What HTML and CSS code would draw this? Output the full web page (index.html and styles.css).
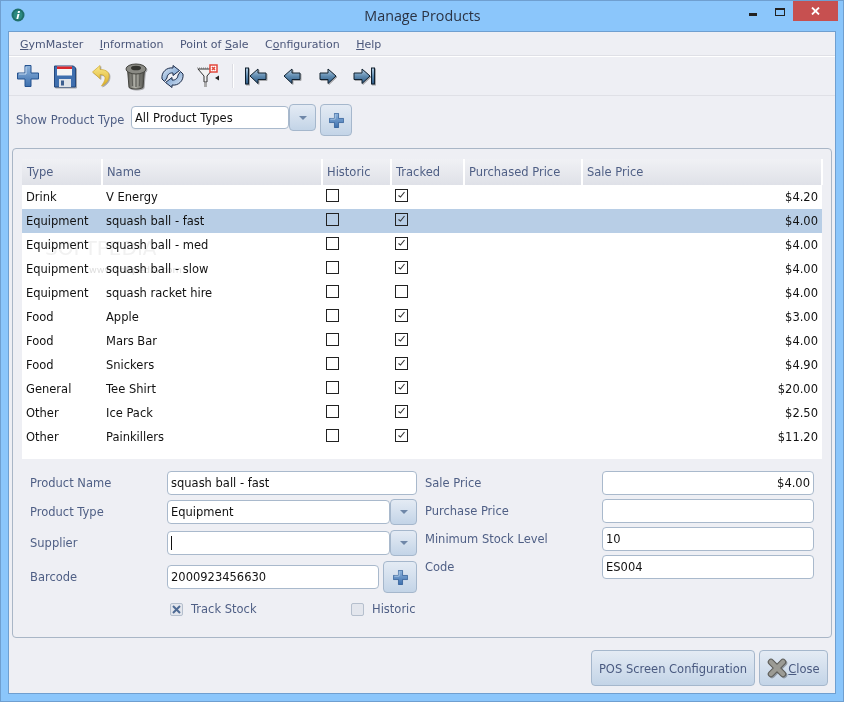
FILE: index.html
```html
<!doctype html>
<html lang="en">
  <head>
    <meta charset="UTF-8" />
    <title>Manage Products</title>
    <link rel="stylesheet" href="styles.css">
  </head>
  <body>
    <svg class="defs" width="0" height="0">
      <defs>
        <linearGradient id="blueFill" x1="0" y1="0" x2="0" y2="1">
          <stop offset="0" stop-color="#8fb4dc" />
          <stop offset="1" stop-color="#3c6fae" />
        </linearGradient>
        <linearGradient id="arrowFill" x1="0" y1="0" x2="0" y2="1">
          <stop offset="0" stop-color="#b4cde2" />
          <stop offset="0.5" stop-color="#5f8bb0" />
          <stop offset="1" stop-color="#2f5a85" />
        </linearGradient>
        <linearGradient id="binFill" x1="0" y1="0" x2="1" y2="0">
          <stop offset="0" stop-color="#55554f" />
          <stop offset="0.45" stop-color="#b5b5ad" />
          <stop offset="1" stop-color="#4b4b46" />
        </linearGradient>
        <linearGradient id="undoFill" x1="0" y1="0" x2="0" y2="1">
          <stop offset="0" stop-color="#f9e98c" />
          <stop offset="1" stop-color="#dcae26" />
        </linearGradient>
        <linearGradient id="syncFill" x1="0" y1="0" x2="1" y2="1">
          <stop offset="0" stop-color="#e4edf7" />
          <stop offset="1" stop-color="#5b8cc6" />
        </linearGradient>
        <symbol id="plus" viewBox="0 0 22 22">
          <path d="M8 0.500h6v7.500h7.500v6H14v7.500H8V14H0.500V8H8z" fill="url(#blueFill)" stroke="#24528f" />
          <path d="M9 2v7H2" fill="none" stroke="#c4d8ee" />
        </symbol>
        <symbol id="leftArrow" viewBox="0 0 18 18">
          <path d="M1 9l8-7v4h8v6.500H9v4z" fill="url(#arrowFill)" stroke="#10202f" stroke-linejoin="round" />
        </symbol>
        <symbol id="check" viewBox="0 0 13 13">
          <path d="M3.500 6.500l2 1.500L9.500 3" fill="none" stroke="#333" stroke-width="1.100" />
        </symbol>
      </defs>
    </svg>

    <div class="window">
      <div class="titlebar">
        <svg class="app-icon" width="14" height="14" viewBox="0 0 14 14">
          <circle cx="7" cy="7" r="6.500" fill="#1f6f6a" />
          <circle cx="7" cy="7" r="4.500" fill="#2c8a80" />
          <path d="M6.500 6h2l-1.300 5H5.400zM7 3h2l-.4 2H6.600z" fill="#fff" />
        </svg>
        <div class="title">Manage Products</div>
        <div class="controls">
          <span class="ctl-min"></span>
          <span class="ctl-max"></span>
          <span class="ctl-close">
            <svg width="9" height="8" viewBox="0 0 9 8"><path d="M1 0.500l7 7M8 0.500l-7 7" stroke="#fff" stroke-width="1.800" /></svg>
          </span>
        </div>
      </div>

      <div class="client">
        <div class="menubar">
          <span class="menu-item"><u>G</u>ymMaster</span>
          <span class="menu-item"><u>I</u>nformation</span>
          <span class="menu-item">Point of <u>S</u>ale</span>
          <span class="menu-item">C<u>o</u>nfiguration</span>
          <span class="menu-item"><u>H</u>elp</span>
        </div>

        <div class="toolbar">
          <span class="tool"><svg width="22" height="22"><use href="#plus" /></svg></span>
          <span class="tool">
            <svg class="shadow" width="23" height="23" viewBox="0 0 23 23">
              <path d="M1.500 1h19l2 2v19h-21z" fill="#3f6fae" stroke="#24487d" />
              <rect x="4" y="1.500" width="15" height="9" fill="#f4f4f4" />
              <rect x="4" y="1.500" width="15" height="2.500" fill="#d9252b" />
              <rect x="6" y="14" width="12" height="8" fill="#dfe3e8" />
              <rect x="8" y="15.500" width="3" height="5" fill="#3d5f8f" />
            </svg>
          </span>
          <span class="tool">
            <svg class="shadow undo" width="18" height="22" viewBox="0 0 18 22">
              <path d="M8 0.500L0.500 7 8 13.500V9.500c3.500 0 5.500 1.500 5 4.500-.4 2.500-2 4.500-3.500 7 5-2 8-6.500 7.500-11C16.500 6 12.500 4.500 8 4.500z" fill="url(#undoFill)" stroke="#cfa82e" stroke-width="0.700" />
            </svg>
          </span>
          <span class="tool">
            <svg class="shadow" width="22" height="27" viewBox="0 0 22 27">
              <path d="M2.500 6L4 24.500c3 2 11 2 14 0L19.500 6z" fill="url(#binFill)" stroke="#44443f" />
              <path d="M7 11l.5 12M11 11v13M15 11l-.5 12" stroke="#5f5f5a" stroke-width="1.300" />
              <ellipse cx="11" cy="6" rx="10" ry="5" fill="#8a8a84" stroke="#44443f" />
              <ellipse cx="11" cy="5" rx="5" ry="2.300" fill="#33332f" />
            </svg>
          </span>
          <span class="tool">
            <svg width="23" height="23" viewBox="0 0 23 23">
              <g id="syncArc">
                <path d="M1 14C0 7 6 2 12 3V0.500l6.500 5-6.500 5V8C8.500 7.500 6 10 6 13l-2.500 3.500z" fill="url(#syncFill)" stroke="#1a2a48" stroke-linejoin="round" />
              </g>
              <use href="#syncArc" transform="rotate(180 11.500 11.500)" />
            </svg>
          </span>
          <span class="tool">
            <svg width="25" height="24" viewBox="0 0 25 24">
              <path d="M1 4h14" stroke="#888" stroke-dasharray="1 1" />
              <path d="M2 5h15l-6 7v6H8v-6z" fill="#f2f2f2" stroke="#333" />
              <path d="M8 19h3v4H8z" fill="#aaa" />
              <rect x="14" y="1" width="7" height="7" fill="#fff" stroke="#e2483c" stroke-width="1.500" />
              <path d="M16 3l3 3M19 3l-3 3" stroke="#e2483c" stroke-width="1.500" />
              <path d="M19 14l4-2.500v5z" fill="#222" />
            </svg>
          </span>
          <span class="tool-sep"></span>
          <span class="tool">
            <svg class="shadow" width="22" height="18" viewBox="0 0 22 18">
              <rect x="0.500" y="1" width="3" height="16" fill="url(#arrowFill)" stroke="#10202f" />
              <use href="#leftArrow" x="4" width="18" height="18" />
            </svg>
          </span>
          <span class="tool"><svg class="shadow" width="18" height="18"><use href="#leftArrow" /></svg></span>
          <span class="tool"><svg class="shadow flip" width="18" height="18"><use href="#leftArrow" /></svg></span>
          <span class="tool">
            <svg class="shadow flip" width="22" height="18" viewBox="0 0 22 18">
              <rect x="0.500" y="1" width="3" height="16" fill="url(#arrowFill)" stroke="#10202f" />
              <use href="#leftArrow" x="4" width="18" height="18" />
            </svg>
          </span>
        </div>

        <div class="filter-row">
          <label class="label">Show Product Type</label>
          <div class="input filter-input">All Product Types</div>
          <button class="btn drop"><span class="caret"></span></button>
          <button class="btn add-lg"><svg width="15" height="15"><use href="#plus" /></svg></button>
        </div>

        <div class="panel">
          <div class="grid-wrap">
            <table class="grid">
              <colgroup>
                <col class="c-type" /><col class="c-name" /><col class="c-hist" /><col class="c-track" /><col class="c-buy" /><col class="c-sale" />
              </colgroup>
              <thead>
                <tr><th>Type</th><th>Name</th><th>Historic</th><th>Tracked</th><th>Purchased Price</th><th>Sale Price</th></tr>
              </thead>
              <tbody>
                <tr><td>Drink</td><td>V Energy</td><td><span class="cb"></span></td><td><span class="cb"><svg width="13" height="13"><use href="#check" /></svg></span></td><td></td><td class="num">$4.20</td></tr>
                <tr class="selected"><td>Equipment</td><td>squash ball - fast</td><td><span class="cb"></span></td><td><span class="cb"><svg width="13" height="13"><use href="#check" /></svg></span></td><td></td><td class="num">$4.00</td></tr>
                <tr><td>Equipment</td><td>squash ball - med</td><td><span class="cb"></span></td><td><span class="cb"><svg width="13" height="13"><use href="#check" /></svg></span></td><td></td><td class="num">$4.00</td></tr>
                <tr><td>Equipment</td><td>squash ball - slow</td><td><span class="cb"></span></td><td><span class="cb"><svg width="13" height="13"><use href="#check" /></svg></span></td><td></td><td class="num">$4.00</td></tr>
                <tr><td>Equipment</td><td>squash racket hire</td><td><span class="cb"></span></td><td><span class="cb"></span></td><td></td><td class="num">$4.00</td></tr>
                <tr><td>Food</td><td>Apple</td><td><span class="cb"></span></td><td><span class="cb"><svg width="13" height="13"><use href="#check" /></svg></span></td><td></td><td class="num">$3.00</td></tr>
                <tr><td>Food</td><td>Mars Bar</td><td><span class="cb"></span></td><td><span class="cb"><svg width="13" height="13"><use href="#check" /></svg></span></td><td></td><td class="num">$4.00</td></tr>
                <tr><td>Food</td><td>Snickers</td><td><span class="cb"></span></td><td><span class="cb"><svg width="13" height="13"><use href="#check" /></svg></span></td><td></td><td class="num">$4.90</td></tr>
                <tr><td>General</td><td>Tee Shirt</td><td><span class="cb"></span></td><td><span class="cb"><svg width="13" height="13"><use href="#check" /></svg></span></td><td></td><td class="num">$20.00</td></tr>
                <tr><td>Other</td><td>Ice Pack</td><td><span class="cb"></span></td><td><span class="cb"><svg width="13" height="13"><use href="#check" /></svg></span></td><td></td><td class="num">$2.50</td></tr>
                <tr><td>Other</td><td>Painkillers</td><td><span class="cb"></span></td><td><span class="cb"><svg width="13" height="13"><use href="#check" /></svg></span></td><td></td><td class="num">$11.20</td></tr>
              </tbody>
            </table>
          </div>

          <div class="form">
            <div class="form-left">
              <div class="field f-name">
                <label class="label">Product Name</label>
                <div class="input grow">squash ball - fast</div>
              </div>
              <div class="field f-type">
                <label class="label">Product Type</label>
                <div class="input grow">Equipment</div>
                <button class="btn drop-sm"><span class="caret"></span></button>
              </div>
              <div class="field f-supplier">
                <label class="label">Supplier</label>
                <div class="input grow"><span class="cursor"></span></div>
                <button class="btn drop-sm"><span class="caret"></span></button>
              </div>
              <div class="field f-barcode">
                <label class="label">Barcode</label>
                <div class="input grow">2000923456630</div>
                <button class="btn add-md"><svg width="15" height="15"><use href="#plus" /></svg></button>
              </div>
              <div class="flags">
                <span class="flag flag-track">
                  <span class="flat-cb">
                    <svg width="11" height="11" viewBox="0 0 11 11"><path d="M2 2l7 7M9 2l-7 7" stroke="#4f6b94" stroke-width="2" /></svg>
                  </span>
                  <span class="label">Track Stock</span>
                </span>
                <span class="flag">
                  <span class="flat-cb"></span>
                  <span class="label">Historic</span>
                </span>
              </div>
            </div>
            <div class="form-right">
              <div class="field-r"><label class="label">Sale Price</label><div class="input wide right">$4.00</div></div>
              <div class="field-r"><label class="label">Purchase Price</label><div class="input wide"></div></div>
              <div class="field-r"><label class="label">Minimum Stock Level</label><div class="input wide">10</div></div>
              <div class="field-r"><label class="label">Code</label><div class="input wide">ES004</div></div>
            </div>
          </div>
        </div>

        <div class="footer">
          <button class="btn foot-btn"><span>POS Screen Configuration</span></button>
          <button class="btn foot-btn close-btn">
            <svg class="shadow" width="20" height="20" viewBox="0 0 20 20">
              <path d="M4 4l12 12M16 4L4 16" stroke="#5d5d59" stroke-width="6.500" stroke-linecap="round" />
              <path d="M4 4l12 12M16 4L4 16" stroke="#9b9b95" stroke-width="4.500" stroke-linecap="round" />
            </svg>
            <span><u>C</u>lose</span>
          </button>
        </div>
      </div>

      <div class="watermark">SOFTPEDIA<small>www.softpedia.com</small></div>
    </div>
  </body>
</html>
```

FILE: styles.css
```css
* {
  box-sizing: border-box;
}

html,
body {
  margin: 0;
  height: 702px;
  overflow: hidden;
}

body {
  font-family: "DejaVu Sans", sans-serif;
  font-size: 11.500px;
  color: #111;
}

.defs {
  position: absolute;
}

.window {
  position: relative;
  width: 844px;
  height: 702px;
  display: flex;
  flex-direction: column;
  padding: 0 7px 7px 7px;
  background: #8bc6fb;
  border: 1px solid #6f9fd0;
}

/* title bar */
.titlebar {
  position: relative;
  height: 30px;
  flex: none;
  margin-right: -1px;
}

.app-icon {
  position: absolute;
  left: 3px;
  top: 7px;
}

.title {
  text-align: center;
  font-family: "Open Sans", sans-serif;
  font-size: 14.300px;
  line-height: 29px;
  color: #2b3344;
}

.controls {
  position: absolute;
  top: 0;
  right: -1px;
  display: flex;
}

.ctl-min {
  width: 8px;
  height: 3px;
  margin: 12px 18px 0 0;
  background: #222;
}

.ctl-max {
  width: 10px;
  height: 8px;
  margin: 7px 8px 0 0;
  border: 1px solid #222;
  border-top-width: 2px;
}

.ctl-close {
  width: 45px;
  height: 20px;
  background: #c75050;
  display: flex;
  align-items: center;
  justify-content: center;
}

.client {
  flex: 1;
  display: flex;
  flex-direction: column;
  background: #eeeff4;
  border: 1px solid #6f9fd0;
}

/* menu */
.menubar {
  height: 24px;
  flex: none;
  display: flex;
  align-items: center;
  padding: 1px 0 0 11px;
  color: #4a5679;
  font-size: 11px;
  border-bottom: 1px solid #dfe0e6;
}

.menu-item {
  margin-right: 16.500px;
}

/* toolbar */
.toolbar {
  height: 40px;
  flex: none;
  display: flex;
  align-items: center;
  padding-left: 1px;
  border-top: 1px solid #fff;
  border-bottom: 1px solid #dfe0e6;
}

.tool {
  width: 36px;
  height: 36px;
  display: flex;
  align-items: center;
  justify-content: center;
}

.tool-sep {
  width: 1px;
  height: 24px;
  margin: 0 5px 0 6px;
  background: #dcdde3;
  box-shadow: 1px 0 0 #fff;
}

.shadow {
  filter: drop-shadow(1px 1px 0.600px rgba(0, 0, 0, 0.3));
}

.undo {
  margin-left: 1px;
}

.flip {
  transform: scaleX(-1);
  filter: drop-shadow(-1px 1px 0.600px rgba(0, 0, 0, 0.3));
}

/* inputs */
.label {
  color: #4f5f85;
}

.input {
  height: 24px;
  padding: 0 3px;
  line-height: 23px;
  background: #fff;
  border: 1px solid #a9b9cc;
  border-radius: 4px;
  white-space: nowrap;
}

.btn {
  display: flex;
  align-items: center;
  justify-content: center;
  padding: 0;
  font: inherit;
  color: #4a5a80;
  background: linear-gradient(#e4ebf4, #c3d4e7);
  border: 1px solid #a5b7cc;
  border-radius: 4px;
}

.caret {
  width: 0;
  height: 0;
  border: 4px solid transparent;
  border-top: 4px solid #6f87a8;
  border-bottom: 0;
}

.filter-row {
  height: 52px;
  flex: none;
  display: flex;
  align-items: flex-start;
  padding: 8px 0 0 7px;
}

.filter-row .label {
  width: 115px;
  margin-top: 9px;
}

.filter-input {
  width: 158px;
  height: 23px;
  line-height: 22px;
  margin-top: 2px;
}

.drop {
  width: 27px;
  height: 27px;
  margin: 0 4px 0 0;
}

.add-lg {
  width: 32px;
  height: 32px;
}

/* panel with the grid and the form */
.panel {
  width: 820px;
  height: 490px;
  flex: none;
  margin-left: 3px;
  padding: 10px 9px 0;
  border: 1px solid #a9b6c6;
  border-radius: 4px;
}

.grid-wrap {
  height: 300px;
  background: #fff;
}

.grid {
  width: 800px;
  border-collapse: collapse;
  table-layout: fixed;
}

.c-type { width: 80px; }
.c-name { width: 220px; }
.c-hist { width: 69px; }
.c-track { width: 73px; }
.c-buy { width: 118px; }
.c-sale { width: 240px; }

.grid th {
  height: 26px;
  padding: 0 0 0 4px;
  font-weight: normal;
  text-align: left;
  color: #4f5f85;
  background: linear-gradient(#f0f1f5, #dfe1e8);
  border-right: 2px solid #fff;
}

.grid th:first-child {
  padding-left: 5px;
}

.grid td {
  height: 24px;
  padding: 0 4px;
  white-space: nowrap;
}

.grid td.num {
  text-align: right;
}

.selected td {
  background: #b8cee6;
}

.cb {
  display: block;
  width: 13px;
  height: 13px;
  margin-top: -3px;
  border: 1px solid #222;
}

.cb svg {
  display: block;
  margin: -1px;
}

/* form */
.form {
  display: flex;
  height: 170px;
  padding: 12px 0 0 8px;
}

.form-left {
  width: 387px;
}

.form-right {
  margin-left: 8px;
}

.field {
  display: flex;
  align-items: center;
}

.field .label {
  width: 137px;
  flex: none;
}

.grow {
  flex: 1;
}

.f-name {
  height: 24px;
}

.f-type {
  height: 26px;
  margin-top: 4px;
}

.f-supplier {
  height: 26px;
  margin-top: 5px;
}

.f-barcode {
  height: 32px;
  margin-top: 5px;
}

.drop-sm {
  width: 27px;
  height: 26px;
}

.add-md {
  width: 34px;
  height: 32px;
  margin-left: 4px;
}

.cursor {
  display: inline-block;
  width: 1px;
  height: 14px;
  margin-top: 4px;
  background: #111;
}

.flags {
  display: flex;
  height: 24px;
  padding: 8px 0 0 140px;
  align-items: center;
}

.flag {
  display: flex;
  align-items: center;
  gap: 8px;
}

.flag-track {
  width: 181px;
}

.flat-cb {
  display: flex;
  align-items: center;
  justify-content: center;
  width: 13px;
  height: 13px;
  background: #e3e6ed;
  border: 1px solid #b5bfcd;
  border-radius: 2px;
}

.field-r {
  display: flex;
  align-items: center;
  margin-bottom: 4px;
}

.field-r .label {
  width: 177px;
  flex: none;
}

.wide {
  width: 212px;
}

.right {
  text-align: right;
}

/* bottom buttons */
.footer {
  display: flex;
  justify-content: flex-end;
  gap: 4px;
  padding: 12px 7px 0 0;
}

.foot-btn {
  height: 36px;
  width: 164px;
  padding-top: 2px;
}

.close-btn {
  width: 69px;
  gap: 1px;
}

.close-btn svg {
  margin-top: -2px;
}

.watermark {
  position: absolute;
  left: 44px;
  top: 235px;
  font-size: 20px;
  color: #f1f1f1;
  mix-blend-mode: multiply;
  pointer-events: none;
}

.watermark small {
  display: block;
  margin: 4px 0 0 44px;
  font-size: 9.500px;
  color: #dedede;
}
```
